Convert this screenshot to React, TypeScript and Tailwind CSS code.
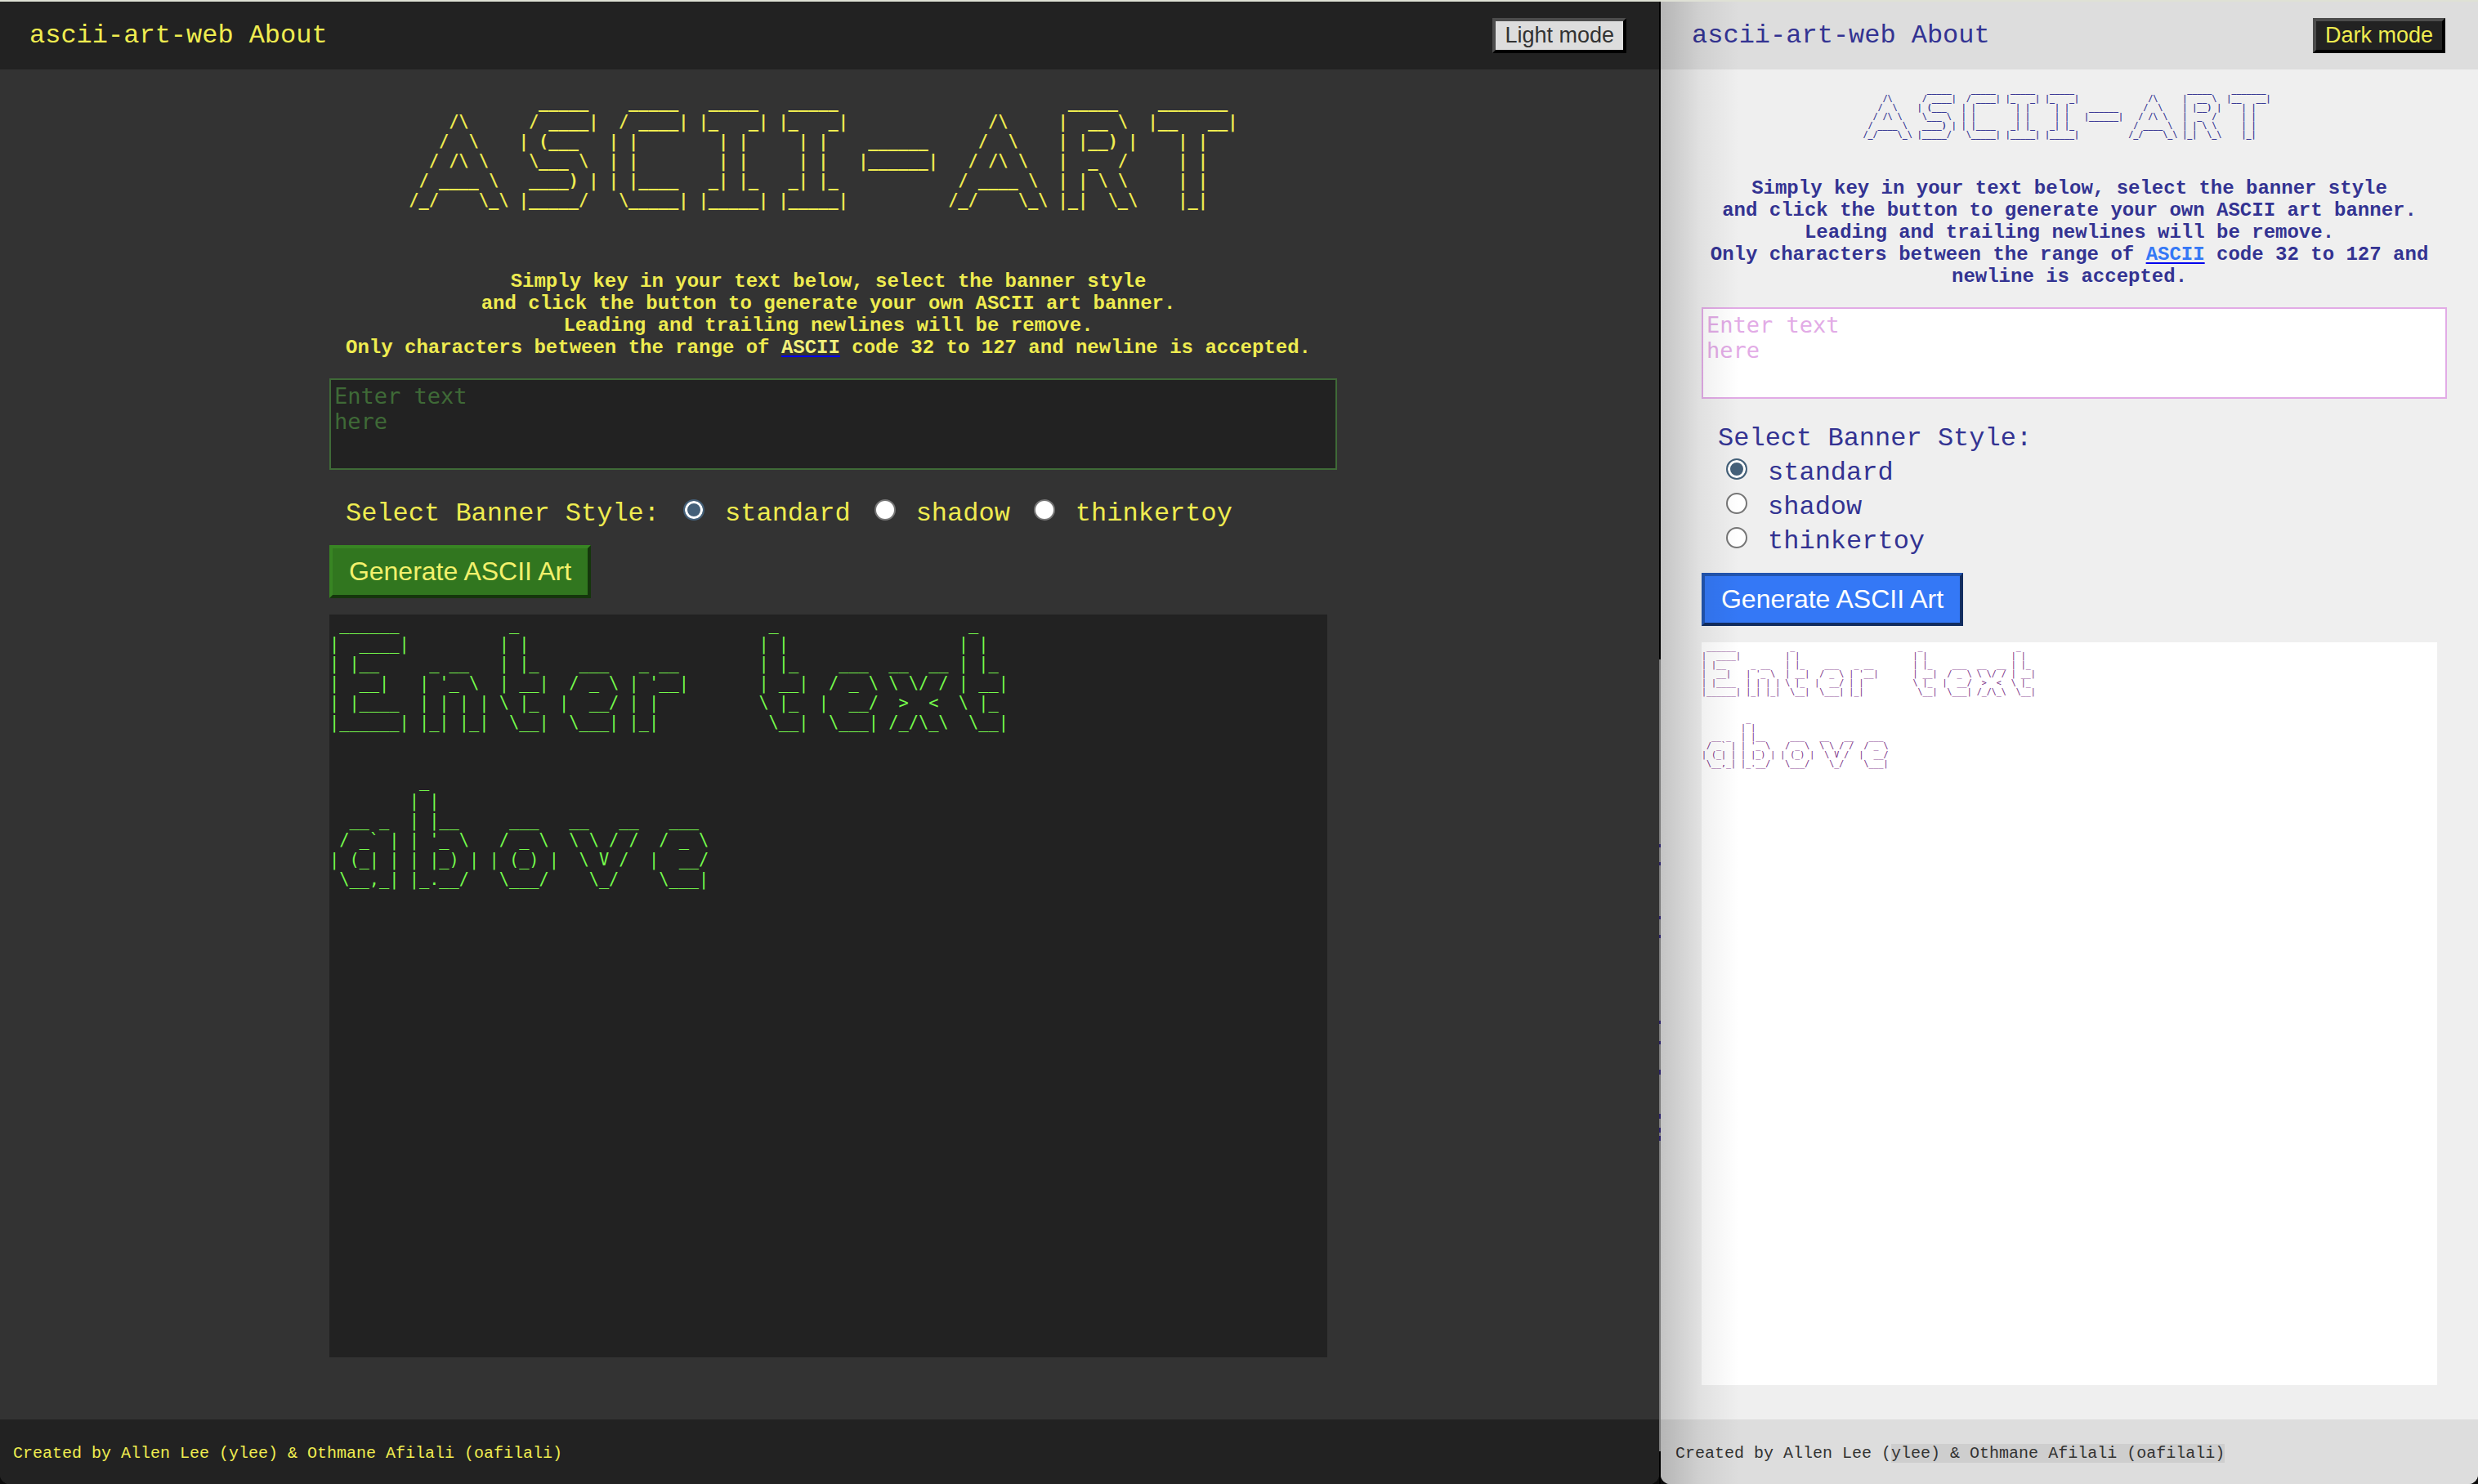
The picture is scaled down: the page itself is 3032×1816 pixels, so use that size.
import React from "react";

type Glyph = string[];

/* Six drawn rows per glyph; banner() adds the two blank rows kept for descenders. */
const GLYPHS: Record<string, Glyph> = {
  " ": ["      ", "      ", "      ", "      ", "      ", "      "],
  "-": ["         ", "         ", " ______  ", "|______| ", "         ", "         "],
  A: ["           ", "    /\\     ", "   /  \\    ", "  / /\\ \\   ", " / ____ \\  ", "/_/    \\_\\ "],
  S: ["  _____  ", " / ____| ", "| (___   ", " \\___ \\  ", " ____) | ", "|_____/  "],
  C: ["  _____  ", " / ____| ", "| |      ", "| |      ", "| |____  ", " \\_____| "],
  I: [" _____  ", "|_   _| ", "  | |   ", "  | |   ", " _| |_  ", "|_____| "],
  R: [" _____   ", "|  __ \\  ", "| |__) | ", "|  _  /  ", "| | \\ \\  ", "|_|  \\_\\ "],
  T: [" _______  ", "|__   __| ", "   | |    ", "   | |    ", "   | |    ", "   |_|    "],
  E: [" ______  ", "|  ____| ", "| |__    ", "|  __|   ", "| |____  ", "|______| "],
  n: ["        ", "        ", " _ __   ", "| '_ \\  ", "| | | | ", "|_| |_| "],
  t: [" _    ", "| |   ", "| |_  ", "| __| ", "\\ |_  ", " \\__| "],
  e: ["       ", "       ", "  ___  ", " / _ \\ ", "|  __/ ", " \\___| "],
  r: ["       ", "       ", " _ __  ", "| '__| ", "| |    ", "|_|    "],
  x: ["       ", "       ", "__  __ ", "\\ \\/ / ", " >  <  ", "/_/\\_\\ "],
  a: ["        ", "        ", "  __ _  ", " / _` | ", "| (_| | ", " \\__,_| "],
  b: [" _      ", "| |     ", "| |__   ", "| '_ \\  ", "| |_) | ", "|_.__/  "],
  o: ["        ", "        ", "  ___   ", " / _ \\  ", "| (_) | ", " \\___/  "],
  v: ["        ", "        ", "__   __ ", "\\ \\ / / ", " \\ V /  ", "  \\_/   "],
};

function banner(text: string): string {
  return text
    .split("\n")
    .map((line) => {
      const rows = Array.from({ length: 6 }, (_, i) =>
        [...line].map((ch) => GLYPHS[ch][i]).join("")
      );
      return [...rows, " ", " "].join("\n");
    })
    .join("\n");
}

const dark = {
  id: "dark",
  panel: "flex-1 bg-[#333333] text-[#efec50]",
  bar: "bg-[#222222]",
  headerPad: "pl-9",
  link: "text-[#efec50]",
  toggle: "Light mode",
  toggleStyle: "bg-[#dddddd] text-[#333333]",
  main: "mr-[20%] ml-[19.85%] mb-[76px]",
  art: "leading-6",
  title: "mt-7 mb-[26px]",
  ascii: "text-[#f1ef7c] decoration-[#0000ee]",
  area: "border-[#3f6a37] bg-[#222222] placeholder:text-[#3f6a37]",
  options: "flex-row pt-[30px]",
  button: "border-t-[#388523] border-l-[#388523] border-r-[#15360c] border-b-[#15360c] bg-[#31761f] text-[#f3f16c]",
  output: "bg-[#222222] text-[#75fb4c]",
  footer: "pl-4 text-[#efec50]",
};

const light: typeof dark = {
  id: "light",
  panel: "w-[32.98%] bg-[#efefef] text-[#333392]",
  bar: "bg-[#dddddd]",
  headerPad: "pl-[38px]",
  link: "text-[#333392]",
  toggle: "Dark mode",
  toggleStyle: "bg-[#222222] text-[#efec50]",
  main: "mx-[5%] mb-[42px]",
  art: "leading-[11px]",
  title: "mt-[19px] mb-[25px]",
  ascii: "text-[#3478f6] decoration-[#0000ee]",
  area: "border-[#e2abe6] bg-white placeholder:text-[#e2abe6]",
  options: "flex-col pt-[31px]",
  button: "border-t-[#2255b0] border-l-[#2255b0] border-r-[#122d60] border-b-[#122d60] bg-[#3478f6] text-white",
  output: "bg-white text-[#75287f]",
  footer: "pl-[18px] text-[#333333]",
};

const MONO = "font-['Liberation_Mono',monospace]";
const SANS = "font-['Liberation_Sans',sans-serif]";
const ART = "font-['DejaVu_Sans_Mono',monospace]";

function Page({ t }: { t: typeof dark }) {
  const isLight = t.id === "light";
  return (
    <section className={`@container relative flex min-w-0 flex-col overflow-hidden rounded-b-xl ${t.panel} ${MONO}`}>
      <header className={`flex h-[83px] items-center justify-between pr-10 ${t.headerPad} ${t.bar}`}>
        <nav className="flex gap-[19px] text-[32px] leading-9">
          <a href="#home" className={t.link}>ascii-art-web</a>
          <a href="#about" className={t.link}>About</a>
        </nav>
        <button
          type="button"
          className={`border-4 border-t-[#4c4c4c] border-r-black border-b-black border-l-[#4c4c4c] px-[11px] py-0.5 text-[27px] leading-[31px] ${SANS} ${t.toggleStyle}`}
        >
          {t.toggle}
        </button>
      </header>

      <main className={`flex flex-1 flex-col ${t.main}`}>
        <h1 className={`flex justify-center ${t.title}`}>
          <pre className={`text-[1cqw] font-bold ${ART} ${t.art}`}>{banner("ASCII-ART")}</pre>
        </h1>
        <p className="text-center text-[24px] leading-[27px] font-bold">
          Simply key in your text below, select the banner style
          <br />
          and click the button to generate your own ASCII art banner.
          <br />
          Leading and trailing newlines will be remove.
          <br />
          Only characters between the range of{" "}
          <a href="#ascii" className={`underline decoration-2 underline-offset-[3px] ${t.ascii}`}>ASCII</a> code 32 to 127 and newline is
          accepted.
        </p>
        <form className="mt-6 flex flex-col items-start" onSubmit={(e) => e.preventDefault()}>
          <textarea
            aria-label="Text"
            placeholder={"Enter text\nhere"}
            className={`box-content block h-[100px] w-full resize-none border-2 p-1 text-[27px] leading-[31px] placeholder:opacity-100 ${ART} ${t.area}`}
          />
          <fieldset
            aria-labelledby={`style-${t.id}`}
            className={`flex px-5 pb-5 text-[32px] leading-9 ${t.options}`}
          >
            <span id={`style-${t.id}`} className={isLight ? "" : "pt-1.5 pr-[19px]"}>
              Select Banner Style:
            </span>
            {["standard", "shadow", "thinkertoy"].map((name) => (
              <label key={name} className="flex items-baseline pt-1.5 pr-[19px] whitespace-nowrap">
                <input
                  type="radio"
                  name={`banner-${t.id}`}
                  defaultChecked={name === "standard"}
                  className="mr-[25px] ml-2.5 size-[26px] appearance-none rounded-full border-2 border-[#767676] bg-white checked:border-[#446079] checked:bg-[#446079] checked:shadow-[inset_0_0_0_3px_white]"
                />
                {name}
              </label>
            ))}
          </fieldset>
          <button
            type="submit"
            className={`w-80 border-4 py-2.5 text-[32px] leading-[37px] whitespace-nowrap ${SANS} ${t.button}`}
          >
            Generate ASCII Art
          </button>
        </form>
        <pre className={`mt-5 flex-1 overflow-hidden text-[1cqw] ${ART} ${t.art} ${t.output}`}>{banner("Enter text\nabove")}</pre>
      </main>

      <footer className={`flex h-[79px] items-center pt-1 text-[20px] leading-[23px] ${t.bar} ${t.footer}`}>
        {isLight ? (
          <p>
            Created by Allen Lee (
            <mark className="bg-[#cecece] text-inherit">ylee) &amp; Othmane Afilali (oafilali)</mark>
          </p>
        ) : (
          <p>Created by Allen Lee (ylee) &amp; Othmane Afilali (oafilali)</p>
        )}
      </footer>

      {isLight && (
        <div className="pointer-events-none absolute inset-y-0 left-0 w-24 bg-linear-to-r from-black/18 via-black/6 to-transparent" />
      )}
    </section>
  );
}

/* Slivers of the window behind that show between the two pages. */
const MARKS = [
  "top-[1031px] h-1",
  "top-[1053px] h-1",
  "top-[1119px] h-1",
  "top-[1142px] h-1",
  "top-[1247px] h-1",
  "top-[1272px] h-1",
  "top-[1307px] h-1.5",
  "top-[1361px] h-1.5",
  "top-[1378px] h-1.5",
  "top-[1388px] h-1.5",
];

export default function App() {
  return (
    <div className="flex min-h-screen flex-col bg-[#0c0c0c]">
      <div className="h-0.5 bg-[#dfe1d5]" />
      <div className="relative flex flex-1">
        <Page t={dark} />
        <div className="relative flex w-0.5 flex-col bg-black">
          <div className="basis-[805px]" />
          <div className="mb-10 flex-1 bg-[#7b7b7b]" />
          {MARKS.map((m) => (
            <span key={m} className={`absolute left-0 w-0.5 bg-[#2a2168] ${m}`} />
          ))}
        </div>
        <Page t={light} />
      </div>
    </div>
  );
}
